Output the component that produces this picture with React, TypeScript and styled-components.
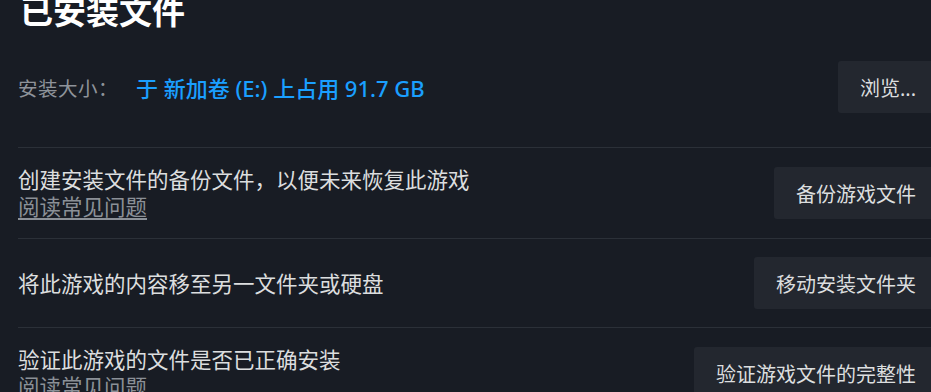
import React from "react"
import styled, { createGlobalStyle } from "styled-components"

const GlobalStyle = createGlobalStyle`
    html, body {
        margin: 0;
        padding: 0;
        background-color: #181c24;
        overflow: hidden;
    }
    * {
        box-sizing: border-box;
    }
`

const Page = styled.div`
    width: 938px;
    height: 392px;
    padding-left: 18px;
    display: flex;
    flex-direction: column;
    font-family: "Noto Sans", "Noto Sans CJK SC", sans-serif;
    color: #dcdedf;
`

const Title = styled.h1`
    margin: -5px 0 0 2px;
    font-size: 33px;
    line-height: 33px;
    font-weight: 700;
    color: #ffffff;
`

const SizeRow = styled.div`
    display: flex;
    align-items: center;
    justify-content: space-between;
    margin-top: 33px;
    padding-bottom: 34px;
    border-bottom: 1px solid #2b3038;
`

const SizeInfo = styled.div`
    display: flex;
    align-items: center;
    column-gap: 18px;
`

const SizeLabel = styled.span`
    color: #8e939a;
    font-size: 19.5px;
    letter-spacing: 0.5px;
`

const SizeValue = styled.span`
    color: #1a9fff;
    font-size: 22px;
    font-weight: 500;
`

const Row = styled.div`
    display: flex;
    align-items: center;
    justify-content: space-between;
    padding: 18px 0;
    border-bottom: 1px solid #2b3038;
`

const RowText = styled.div`
    display: flex;
    flex-direction: column;
    font-size: 21.5px;
    line-height: 27px;
`

const Description = styled.span`
    color: #dcdedf;
`

const FaqLink = styled.a`
    color: #8b9097;
    text-decoration: underline;
    text-underline-offset: 3px;
    align-self: flex-start;
    cursor: pointer;
`

const Button = styled.button`
    height: 52px;
    padding: 0 22px;
    background-color: #23272f;
    border: none;
    border-radius: 3px;
    color: #dcdedf;
    font-family: "Noto Sans", "Noto Sans CJK SC", sans-serif;
    font-size: 20px;
    white-space: nowrap;
    cursor: pointer;
`

interface Action {
    text: string;
    faq: boolean;
    button: string;
}

const actions: Action[] = [
    { text: "创建安装文件的备份文件，以便未来恢复此游戏", faq: true, button: "备份游戏文件" },
    { text: "将此游戏的内容移至另一文件夹或硬盘", faq: false, button: "移动安装文件夹" },
    { text: "验证此游戏的文件是否已正确安装", faq: true, button: "验证游戏文件的完整性" },
]

const App: React.FC = () => {
    return (
        <>
            <GlobalStyle />
            <Page>
                <Title>已安装文件</Title>
                <SizeRow>
                    <SizeInfo>
                        <SizeLabel>安装大小：</SizeLabel>
                        <SizeValue>于 新加卷 (E:) 上占用 91.7 GB</SizeValue>
                    </SizeInfo>
                    <Button>浏览...</Button>
                </SizeRow>
                {actions.map((action) => (
                    <Row key={action.button}>
                        <RowText>
                            <Description>{action.text}</Description>
                            {action.faq && <FaqLink>阅读常见问题</FaqLink>}
                        </RowText>
                        <Button>{action.button}</Button>
                    </Row>
                ))}
            </Page>
        </>
    )
}

export default App
